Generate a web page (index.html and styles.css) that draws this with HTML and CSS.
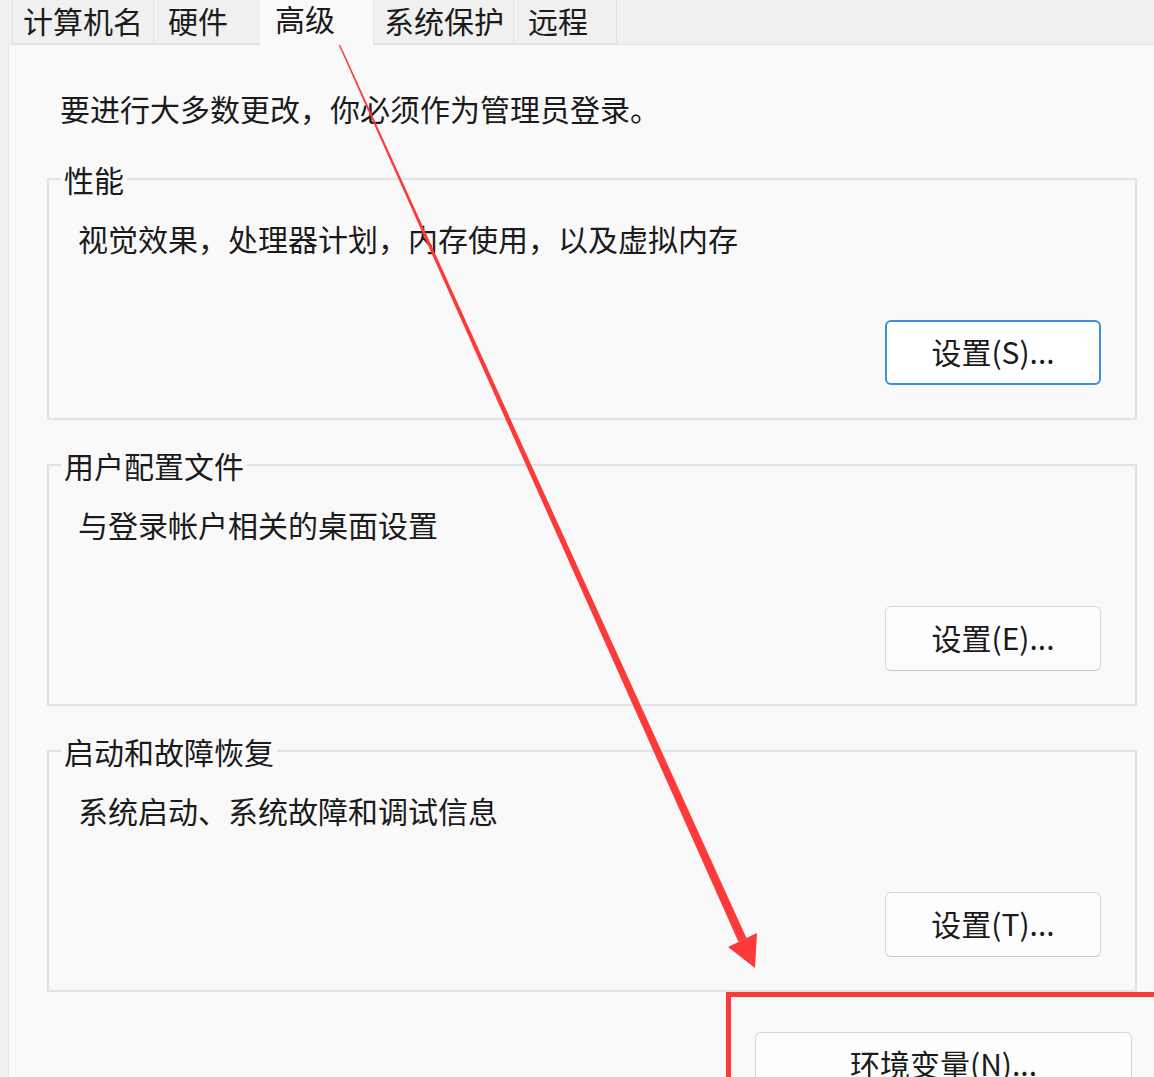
FILE: index.html
```html
<!DOCTYPE html>
<html lang="zh-CN">
<head>
    <meta charset="UTF-8">
    <title>系统属性 - 高级</title>
    <link rel="stylesheet" href="styles.css">
</head>
<body>
<div class="tabs">
    <div class="tab tab-name">计算机名</div>
    <div class="tab tab-hw">硬件</div>
    <div class="tab tab-adv active">高级</div>
    <div class="tab tab-prot">系统保护</div>
    <div class="tab tab-remote">远程</div>
</div>

<div class="panel">
    <p class="intro">要进行大多数更改，你必须作为管理员登录。</p>

    <div class="group">
        <div class="group-title">性能</div>
        <div class="group-text">视觉效果，处理器计划，内存使用，以及虚拟内存</div>
        <div class="group-actions"><button class="btn focused">设置(S)...</button></div>
    </div>

    <div class="group">
        <div class="group-title">用户配置文件</div>
        <div class="group-text">与登录帐户相关的桌面设置</div>
        <div class="group-actions"><button class="btn">设置(E)...</button></div>
    </div>

    <div class="group">
        <div class="group-title">启动和故障恢复</div>
        <div class="group-text">系统启动、系统故障和调试信息</div>
        <div class="group-actions"><button class="btn">设置(T)...</button></div>
    </div>

    <div class="env-row"><button class="btn env-btn">环境变量(N)...</button></div>
</div>

<!-- annotation overlay -->
<div class="mark-box"></div>
<svg class="mark-arrow" width="1154" height="1077" viewBox="0 0 1154 1077">
    <polygon points="334.4,35.3 335.6,34.7 746.6,938.2 738.4,941.8" fill="#fc3a3a"/>
    <polygon points="728,947 757,933 755,968" fill="#fc3a3a"/>
</svg>
</body>
</html>
```

FILE: styles.css
```css
html, body {
    height: 100%;
}

body {
    margin: 0;
    background-color: #f0f0f0;
    font-family: "Noto Sans CJK SC", "Microsoft YaHei", sans-serif;
    font-size: 30px;
    line-height: 30px;
    color: #1b1b1b;
    overflow: hidden;
    position: relative;
    display: flex;
    flex-direction: column;
}

.tabs {
    display: flex;
    height: 44px;
    padding-left: 12px;
    position: relative;
    z-index: 1;
}

.tab {
    box-sizing: border-box;
    height: 44px;
    padding-top: 5px;
    background-color: #f0f0f0;
    border-left: 1px solid #e2e2e2;
    border-bottom: 1px solid #e2e2e2;
    white-space: nowrap;
}

.tab-name { width: 141px; padding-left: 10px; }
.tab-hw { width: 107px; padding-left: 14px; }
.tab-adv { width: 113px; padding-left: 15px; }
.tab-prot { width: 140px; padding-left: 10px; }
.tab-remote { width: 104px; padding-left: 14px; border-right: 1px solid #e2e2e2; }

.tab.active {
    background-color: #f9f9f9;
    border-left: none;
    border-bottom: none;
    height: 45px;
    padding-top: 3px;
}

.panel {
    flex: 1;
    margin-left: 8px;
    background-color: #f9f9f9;
    border-left: 1px solid #e4e4e4;
    border-top: 1px solid #e2e2e2;
    padding-top: 48px;
}

.intro {
    margin: 0 0 55px 51px;
}

.group {
    margin: 0 17px 44px 38px;
    border: 2px solid #e3e3e3;
    height: 238px;
}

.group:nth-of-type(3) {
    margin-bottom: 40px;
}

.group-title {
    width: max-content;
    margin: -16px 0 0 12px;
    padding: 0 3px;
    background-color: #f9f9f9;
}

.group-text {
    margin: 29px 0 0 29px;
}

.group-actions {
    display: flex;
    justify-content: flex-end;
    margin: 67px 34px 0 0;
}

.btn {
    box-sizing: border-box;
    width: 216px;
    height: 65px;
    font-family: inherit;
    font-size: 30px;
    color: #1b1b1b;
    background-color: #fdfdfd;
    border: 1px solid #d5d5d5;
    border-bottom-color: #c8c8c8;
    border-radius: 6px;
    padding: 0 0 4px 0;
}

.btn.focused {
    border: 2px solid #3d8ee0;
    background-color: #ffffff;
}

.env-row {
    display: flex;
    justify-content: flex-end;
    margin-right: 22px;
}

.env-btn {
    width: 377px;
}

.mark-box {
    position: absolute;
    left: 726px;
    top: 992px;
    right: 0;
    bottom: 0;
    border-top: 5px solid #fc3a3a;
    border-left: 5px solid #fc3a3a;
}

.mark-arrow {
    position: absolute;
    left: 0;
    top: 0;
    pointer-events: none;
}
```
